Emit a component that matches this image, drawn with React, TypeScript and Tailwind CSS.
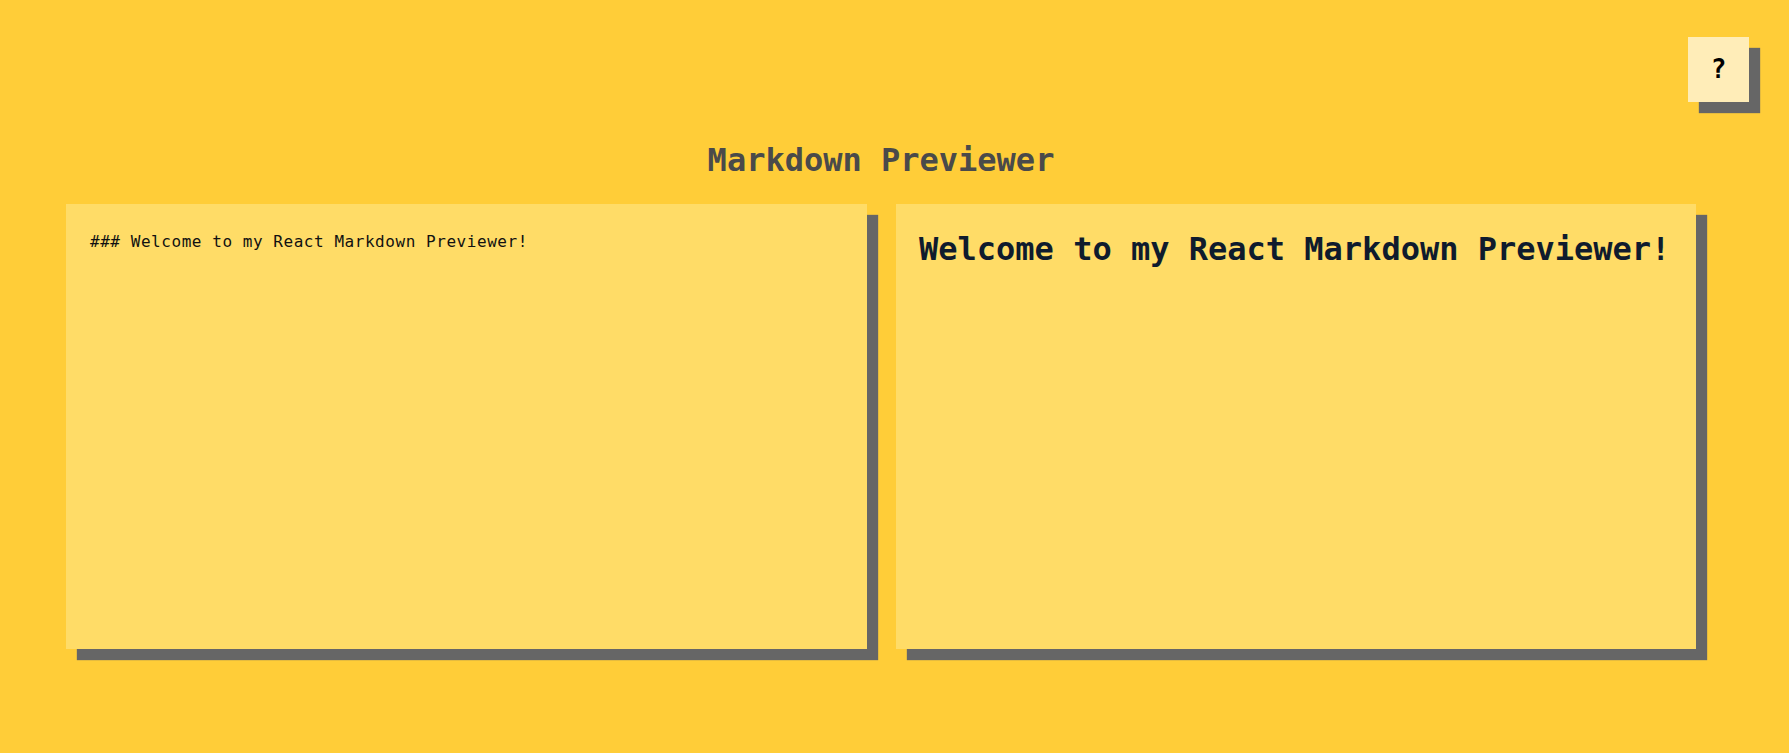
import React, { useState } from 'react';

const mono = "font-['DejaVu_Sans_Mono',monospace]";

export default function App() {
    const [markdown, setMarkdown] = useState('### Welcome to my React Markdown Previewer!');
    const heading = markdown.replace(/^#+\s*/, '');

    return (
        <div className={`relative min-h-[753px] w-full bg-[#ffcd38] ${mono}`}>
            {/* Help button */}
            <button className="absolute left-[1688px] top-[37px] flex h-[65px] w-[61px] items-center justify-center bg-[#ffedb8] text-[26px] font-bold text-black shadow-[11px_11px_1px_#666666]">
                ?
            </button>

            <div className="ml-[66px] flex w-[1630px] flex-col">
                <h1 className="mt-[144px] text-center text-[32px] font-bold leading-none text-[#4a4a4a]">
                    Markdown Previewer
                </h1>

                <div className="mt-[28px] flex gap-[29px]">
                    {/* Editor */}
                    <div className="h-[445px] w-[801px] bg-[#ffdc67] shadow-[11px_11px_1px_#666666]">
                        <textarea
                            value={markdown}
                            onChange={e => setMarkdown(e.target.value)}
                            spellCheck={false}
                            className="h-full w-full resize-none bg-transparent px-[24px] pt-[28px] text-[16px] leading-[1.2] tracking-[0.55px] text-[#111111] outline-none"
                        />
                    </div>

                    {/* Preview */}
                    <div className="h-[445px] w-[800px] bg-[#ffdc67] px-[23px] pt-[26px] shadow-[11px_11px_1px_#666666]">
                        <h3 className="text-[32px] font-bold leading-[1.2] text-[#0f1b2d]">
                            {heading}
                        </h3>
                    </div>
                </div>
            </div>
        </div>
    );
}
